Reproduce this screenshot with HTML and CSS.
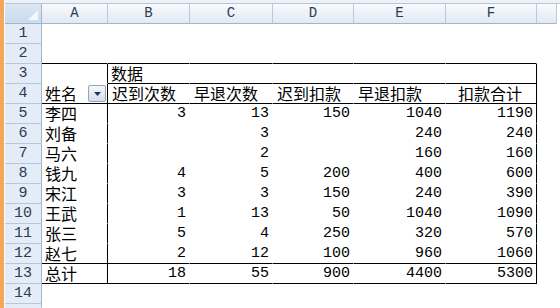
FILE: index.html
```html
<!DOCTYPE html>
<html>
<head>
<meta charset="utf-8">
<link rel="stylesheet" href="styles.css">
</head>
<body>
<div class="screen">
  <div class="strip"></div>
  <div class="sheet">
    <div class="topbar"></div>
    <div class="row hdr">
      <div class="c corner"><span class="tri"></span></div>
      <div class="c">A</div><div class="c">B</div><div class="c">C</div><div class="c">D</div><div class="c">E</div><div class="c">F</div><div class="c"></div><div class="c blank"></div>
    </div>
    <div class="row"><div class="c rh">1</div><div class="c"></div><div class="c"></div><div class="c"></div><div class="c"></div><div class="c"></div><div class="c"></div><div class="c"></div><div class="c"></div></div>
    <div class="row"><div class="c rh">2</div><div class="c bb"></div><div class="c bb"></div><div class="c bb"></div><div class="c bb"></div><div class="c bb"></div><div class="c bb"></div><div class="c"></div><div class="c"></div></div>
    <div class="row"><div class="c rh">3</div><div class="c br"></div><div class="c bb zh">数据</div><div class="c bb"></div><div class="c bb"></div><div class="c bb"></div><div class="c bb br"></div><div class="c"></div><div class="c"></div></div>
    <div class="row"><div class="c rh">4</div><div class="c bb br zh name"><span>姓名</span><span class="dd"><svg width="7" height="4" viewBox="0 0 7 4"><polygon points="0,0 7,0 3.5,4" fill="#1d3566"/></svg></span></div><div class="c bb zh hd">迟到次数</div><div class="c bb zh hd">早退次数</div><div class="c bb zh hd">迟到扣款</div><div class="c bb zh hd">早退扣款</div><div class="c bb br zh hd hf">扣款合计</div><div class="c"></div><div class="c"></div></div>
    <div class="row"><div class="c rh">5</div><div class="c br zh">李四</div><div class="c n">3</div><div class="c n">13</div><div class="c n">150</div><div class="c n">1040</div><div class="c n br">1190</div><div class="c"></div><div class="c"></div></div>
    <div class="row"><div class="c rh">6</div><div class="c br zh">刘备</div><div class="c n"></div><div class="c n">3</div><div class="c n"></div><div class="c n">240</div><div class="c n br">240</div><div class="c"></div><div class="c"></div></div>
    <div class="row"><div class="c rh">7</div><div class="c br zh">马六</div><div class="c n"></div><div class="c n">2</div><div class="c n"></div><div class="c n">160</div><div class="c n br">160</div><div class="c"></div><div class="c"></div></div>
    <div class="row"><div class="c rh">8</div><div class="c br zh">钱九</div><div class="c n">4</div><div class="c n">5</div><div class="c n">200</div><div class="c n">400</div><div class="c n br">600</div><div class="c"></div><div class="c"></div></div>
    <div class="row"><div class="c rh">9</div><div class="c br zh">宋江</div><div class="c n">3</div><div class="c n">3</div><div class="c n">150</div><div class="c n">240</div><div class="c n br">390</div><div class="c"></div><div class="c"></div></div>
    <div class="row"><div class="c rh">10</div><div class="c br zh">王武</div><div class="c n">1</div><div class="c n">13</div><div class="c n">50</div><div class="c n">1040</div><div class="c n br">1090</div><div class="c"></div><div class="c"></div></div>
    <div class="row"><div class="c rh">11</div><div class="c br zh">张三</div><div class="c n">5</div><div class="c n">4</div><div class="c n">250</div><div class="c n">320</div><div class="c n br">570</div><div class="c"></div><div class="c"></div></div>
    <div class="row"><div class="c rh">12</div><div class="c br bb zh">赵七</div><div class="c n bb">2</div><div class="c n bb">12</div><div class="c n bb">100</div><div class="c n bb">960</div><div class="c n br bb">1060</div><div class="c"></div><div class="c"></div></div>
    <div class="row"><div class="c rh">13</div><div class="c br bb zh">总计</div><div class="c n bb">18</div><div class="c n bb">55</div><div class="c n bb">900</div><div class="c n bb">4400</div><div class="c n br bb">5300</div><div class="c"></div><div class="c"></div></div>
    <div class="row"><div class="c rh">14</div><div class="c"></div><div class="c"></div><div class="c"></div><div class="c"></div><div class="c"></div><div class="c"></div><div class="c"></div><div class="c"></div></div>
    <div class="row last"><div class="c rh"></div><div class="c"></div><div class="c"></div><div class="c"></div><div class="c"></div><div class="c"></div><div class="c"></div><div class="c"></div><div class="c"></div></div>
  </div>
</div>
</body>
</html>
```
FILE: styles.css
```css
html, body {
  margin: 0;
  padding: 0;
  background: #ffffff;
}
body {
  width: 560px;
  height: 308px;
  overflow: hidden;
  font-family: "Liberation Mono", monospace;
  color: #000;
}
.screen {
  display: flex;
  height: 308px;
  overflow: hidden;
}
.strip {
  flex: none;
  width: 4px;
  margin-right: 1px;
  background: #f4a65a;
}
.sheet {
  flex: 1;
  display: flex;
  flex-direction: column;
  min-width: 0;
  overflow: hidden;
}
.topbar {
  flex: none;
  height: 3px;
  background: #eef2f8;
  border-bottom: 1px solid #b5c6da;
}
.row {
  flex: none;
  display: grid;
  grid-template-columns: 37px 66px 82px 83px 81px 92px 91px 20px 1fr;
  height: 20px;
}
.row.last {
  flex: 1;
  height: auto;
  min-height: 0;
}
.c {
  box-sizing: border-box;
  border-right: 1px solid transparent;
  border-bottom: 1px solid transparent;
  display: flex;
  align-items: center;
  padding: 0 3px;
  white-space: nowrap;
  font-size: 15px;
  line-height: 17px;
}
.hdr .c {
  background: linear-gradient(#f8fafd, #e2e9f3);
  border-right-color: #b9c8da;
  border-bottom-color: #9eb6ce;
  justify-content: center;
  color: #2b3c52;
  font-size: 14px;
}
.hdr .c.blank {
  background: #ffffff;
  border-color: transparent;
}
.hdr .c.corner {
  position: relative;
  background: linear-gradient(#dbe6f3, #cbdaee);
  border-right-color: #9eb6ce;
}
.tri {
  position: absolute;
  right: 3px;
  bottom: 3px;
  width: 0;
  height: 0;
  border-left: 10px solid transparent;
  border-bottom: 10px solid #f4f7fb;
}
.rh {
  background: #e4ecf7;
  border-right-color: #9eb6ce;
  border-bottom-color: #b7c8dc;
  justify-content: center;
  color: #2b3c52;
  font-size: 15px;
}
.last .rh { border-bottom-color: transparent; }
.bb { border-bottom-color: #000; }
.br { border-right-color: #000; }
.zh {
  font-family: "Noto Sans CJK SC", sans-serif;
  font-size: 16px;
  line-height: 17px;
}
.hd { padding-left: 4px; }
.hf { padding-left: 12px; }
.n { justify-content: flex-end; }
.name {
  justify-content: space-between;
  padding-right: 1px;
}
.dd {
  box-sizing: border-box;
  width: 18px;
  height: 17px;
  border: 1px solid #98a5b8;
  border-radius: 2px;
  background: linear-gradient(#f6f8fb, #d6dde7);
  display: flex;
  align-items: center;
  justify-content: center;
}
.dd svg { display: block; }
```
